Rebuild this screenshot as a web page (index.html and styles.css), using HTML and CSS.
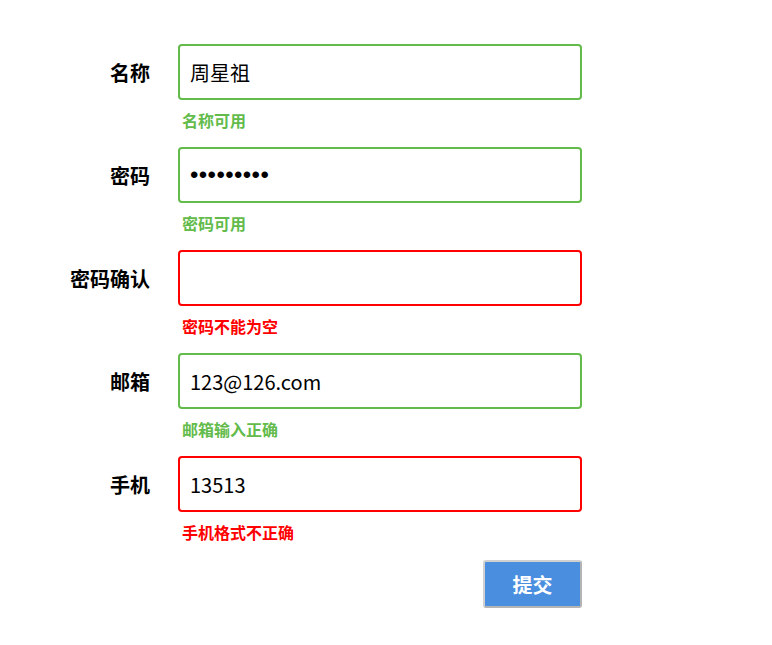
FILE: index.html
```html
<!DOCTYPE html>
<html lang="zh-CN">
<head>
<meta charset="utf-8">
<title>注册</title>
<link rel="stylesheet" href="styles.css">
</head>
<body>
<form class="form">
  <div class="row">
    <label class="label">名称</label>
    <div class="field">
      <input class="input ok" type="text" value="周星祖">
      <div class="msg ok-text">名称可用</div>
    </div>
  </div>
  <div class="row">
    <label class="label">密码</label>
    <div class="field">
      <input class="input ok pwd" type="password" value="123456789">
      <div class="msg ok-text">密码可用</div>
    </div>
  </div>
  <div class="row">
    <label class="label">密码确认</label>
    <div class="field">
      <input class="input err pwd" type="password" value="">
      <div class="msg err-text">密码不能为空</div>
    </div>
  </div>
  <div class="row">
    <label class="label">邮箱</label>
    <div class="field">
      <input class="input ok" type="text" value="123@126.com">
      <div class="msg ok-text">邮箱输入正确</div>
    </div>
  </div>
  <div class="row">
    <label class="label">手机</label>
    <div class="field">
      <input class="input err" type="text" value="13513">
      <div class="msg err-text">手机格式不正确</div>
    </div>
  </div>
  <div class="actions">
    <button class="submit" type="button">提交</button>
  </div>
</form>
</body>
</html>
```
FILE: styles.css
```css
html, body {
  margin: 0;
  padding: 0;
  background: #fff;
}
body {
  font-family: "Noto Sans CJK SC", "Noto Sans", sans-serif;
  color: #000;
}
.form {
  padding-top: 44px;
  width: 582px;
}
.row {
  display: grid;
  grid-template-columns: 150px 404px;
  column-gap: 28px;
}
.label {
  height: 56px;
  display: flex;
  align-items: center;
  justify-content: flex-end;
  font-size: 20px;
  font-weight: bold;
}
.field {
  display: flex;
  flex-direction: column;
}
.input {
  box-sizing: border-box;
  width: 404px;
  height: 56px;
  border: 2px solid;
  border-radius: 4px;
  padding: 0 10px;
  font-family: "Noto Sans CJK SC", "Noto Sans", sans-serif;
  font-size: 20px;
  color: #000;
  outline: none;
  background: #fff;
}
.input.pwd {
  font-family: "Liberation Sans", Arial, sans-serif;
  font-size: 24px;
  letter-spacing: 0.4px;
}
.input.ok { border-color: #62bb4a; }
.input.err { border-color: #ff0000; }
.msg {
  padding: 8px 0 15px 4px;
  line-height: 24px;
  font-size: 16px;
  font-weight: bold;
}
.ok-text { color: #62bb4a; }
.err-text { color: #ff0000; }
.actions {
  display: flex;
  justify-content: flex-end;
  padding-top: 1px;
}
.submit {
  width: 99px;
  height: 48px;
  background: #4a8ee0;
  color: #fff;
  border: 2px solid #b4b4b4;
  border-top-color: #d0d0d0;
  border-left-color: #d0d0d0;
  border-radius: 3px;
  font-family: "Noto Sans CJK SC", "Noto Sans", sans-serif;
  font-size: 20px;
  font-weight: bold;
  padding: 0;
}
```
